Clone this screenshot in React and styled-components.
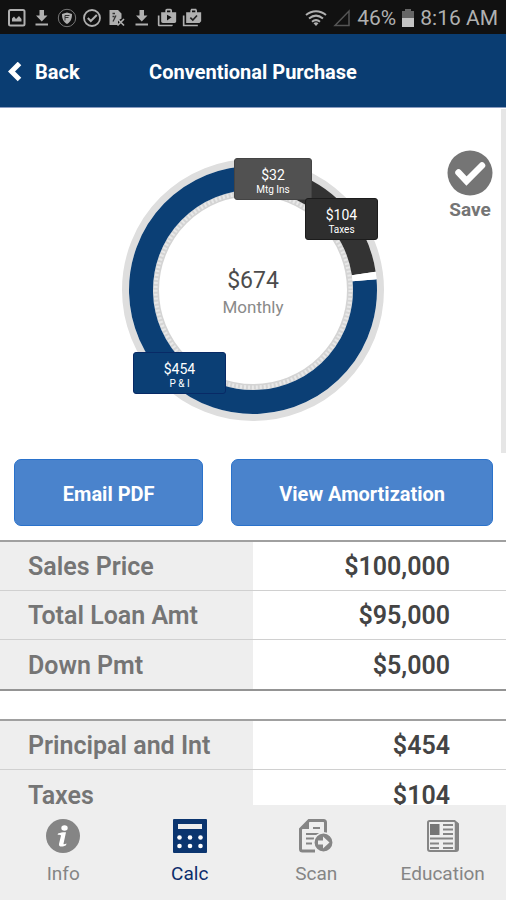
import React from "react";
import styled, { createGlobalStyle } from "styled-components";
import { MdShopTwo } from "react-icons/md";

const GlobalStyle = createGlobalStyle`
  * { box-sizing: border-box; }
  body { margin: 0; background: #fff; font-family: Roboto, "Liberation Sans", sans-serif; }
  button, a { font-family: inherit; }
`;

const Screen = styled.div`
  display: flex;
  flex-direction: column;
  height: 100vh;
  background: #fff;
`;

const StatusBar = styled.div`
  display: flex;
  flex: none;
  align-items: center;
  justify-content: space-between;
  height: 34px;
  padding: 2px 8px 0 7px;
  background: #111;
  color: #b0b0b0;
  font-size: 21px;
  line-height: 24px;
`;

const Notifications = styled.div`
  display: flex;
  gap: 5px;
  svg { width: 20px; height: 20px; }
`;

const DeviceState = styled.div`
  display: flex;
  align-items: center;
  gap: 6px;
`;

const Header = styled.header`
  display: grid;
  grid-template-columns: 1fr auto 1fr;
  flex: none;
  align-items: center;
  height: 74px;
  padding: 2px 8px 0;
  border-bottom: 1px solid #8a9cc0;
  background: #0a3d72;
  color: #fff;
`;

const BackButton = styled.button`
  display: flex;
  align-items: center;
  justify-self: start;
  gap: 13px;
  padding: 0;
  border: 0;
  background: none;
  color: inherit;
  font-size: 20px;
  font-weight: 700;
  line-height: 24px;
`;

const Title = styled.h1`
  margin: 0;
  font-size: 20px;
  font-weight: 700;
  line-height: 24px;
`;

const Viewport = styled.div`
  position: relative;
  flex: 1;
  min-height: 0;
`;

const Main = styled.main`
  height: 100%;
  overflow-y: auto;
  scrollbar-width: none;
`;

const ScrollThumb = styled.div`
  position: absolute;
  top: 1px;
  right: 0;
  width: 5px;
  height: 344px;
  background: #e6e6e6;
`;

const Summary = styled.section`
  display: grid;
  grid-template-columns: 1fr auto 1fr;
  padding: 42px 13px 38px;
`;

const Chart = styled.div`
  position: relative;
  grid-column: 2;
  width: 262px;
  height: 262px;
  margin-top: 9px;
`;

const ChartTotal = styled.div`
  position: absolute;
  inset: 0;
  display: flex;
  flex-direction: column;
  align-items: center;
  justify-content: center;
  padding-top: 6px;
  color: #4c4c4c;
  font-size: 23px;
  line-height: 28px;
  small { color: #8a8a8a; font-size: 17px; line-height: 24px; }
`;

const Tag = styled.div`
  position: absolute;
  top: ${(p) => p.$y}px;
  left: ${(p) => p.$x}px;
  display: flex;
  flex-direction: column;
  align-items: center;
  width: ${(p) => p.$w}px;
  height: 42px;
  padding-top: 8px;
  border: 1px solid ${(p) => p.$edge};
  border-radius: 3px;
  background: ${(p) => p.$fill};
  color: #fff;
  font-size: 14px;
  line-height: 16px;
  small { font-size: 10px; line-height: 14px; }
`;

const SaveButton = styled.button`
  display: flex;
  flex-direction: column;
  align-items: center;
  align-self: start;
  justify-self: end;
  gap: 2px;
  padding: 0;
  border: 0;
  background: none;
  color: #757575;
  font-size: 19px;
  font-weight: 700;
  line-height: 24px;
`;

const Actions = styled.div`
  display: flex;
  gap: 28px;
  padding: 0 13px 0 14px;
`;

const ActionButton = styled.button`
  flex: ${(p) => p.$grow} 1 0;
  height: 67px;
  padding: 2px 0 0;
  border: 1px solid #2a72cb;
  border-radius: 7px;
  background: #4a83cc;
  color: #fff;
  font-size: 20px;
  font-weight: 700;
  line-height: 24px;
`;

const Figures = styled.table`
  width: 100%;
  margin: ${(p) => (p.$first ? 14 : 28)}px 0 0;
  border-collapse: separate;
  border-spacing: 0;
  border-top: 2px solid #a0a0a0;
  border-bottom: 2px solid #949494;
  table-layout: fixed;
`;

const FigureRow = styled.tr`
  height: 49px;
  &:not(:last-child) > * { border-bottom: 1px solid #d0d0d0; }
`;

const FigureLabel = styled.th`
  width: 50%;
  padding: 2px 0 0 28px;
  background: #eee;
  color: #757575;
  font-size: 25px;
  font-weight: 600;
  line-height: 28px;
  text-align: left;
`;

const FigureValue = styled.td`
  padding: 2px 56px 0 0;
  color: #444;
  font-size: 25px;
  font-weight: 600;
  line-height: 28px;
  text-align: right;
`;

const TabBar = styled.nav`
  display: grid;
  grid-template-columns: repeat(4, 1fr);
  flex: none;
  height: 95px;
  padding-top: 14px;
  background: #eee;
`;

const Tab = styled.a`
  display: flex;
  flex-direction: column;
  align-items: center;
  gap: 9px;
  color: ${(p) => (p.$active ? "#0b2c6b" : "#858585")};
  font-size: 19px;
  line-height: 24px;
  text-decoration: none;
`;

const ImageIcon = () => (
  <svg viewBox="0 0 20 20" fill="none" stroke="currentColor" aria-hidden="true">
    <rect x="2" y="2" width="15.5" height="15.5" rx="1.5" strokeWidth="2" />
    <path d="M5 13.500v-3l2-2 2 2.500 3-3 2.500 3v2.500z" fill="currentColor" stroke="none" />
  </svg>
);
const DownloadIcon = () => (
  <svg viewBox="0 0 20 20" fill="currentColor" aria-hidden="true">
    <path d="M7.500 2h4.500v5.500h3.500L9.750 13.500 4 7.500h3.500zM3.500 15.500h12.500v2H3.500z" />
  </svg>
);
const ShieldIcon = () => (
  <svg viewBox="0 0 20 20" fill="none" aria-hidden="true">
    <circle cx="10" cy="10" r="8.700" stroke="#777" strokeWidth="1" />
    <path d="M10 4.500l5 1.500c0 5-1.500 8-5 10-3.500-2-5-5-5-10z" fill="currentColor" />
    <path d="M8 7.500h4.500M8 9.500h3.500M8 7.500v5" stroke="#333" strokeWidth="1" />
  </svg>
);
const CircleCheckIcon = () => (
  <svg viewBox="0 0 20 20" fill="none" stroke="currentColor" aria-hidden="true">
    <circle cx="10" cy="10" r="8" strokeWidth="1.800" />
    <path d="M5.800 10l3 3 6-6" strokeWidth="2" />
  </svg>
);
const FileErrorIcon = () => (
  <svg viewBox="0 0 20 20" fill="none" aria-hidden="true">
    <path d="M2.500 2h8.500l3.500 3.500v5l-3.500 2v4.500H2.500z" fill="currentColor" />
    <path d="M5.500 5.500h2.500M5.500 8.500h2M9 7.500l-3 6" stroke="#333" strokeWidth="1.300" />
    <path d="M10.500 11l6.500 6.500m0-6.500l-6.500 6.500" stroke="currentColor" strokeWidth="1.700" />
  </svg>
);
const BagCheckIcon = () => (
  <svg viewBox="0 0 24 24" fill="none" aria-hidden="true">
    <path d="M2 9v12h17" stroke="currentColor" strokeWidth="2" />
    <path fillRule="evenodd" fill="currentColor" d="M5 5h5V3l1-2h6l1 2v2h5v11l-2 2H5zM12 3v2h4V3z" />
    <path d="M10 11.500l3 3 5-5.500" stroke="#222" strokeWidth="2" />
  </svg>
);
const WifiIcon = () => (
  <svg width="22" height="18" viewBox="0 0 22 18" fill="none" stroke="currentColor" strokeWidth="2" aria-hidden="true">
    <path d="M1 6c6-5 14-5 20 0M4 9.500c4.500-3.700 9.500-3.700 14 0M7 12.700c2.500-2 5.500-2 8 0" />
    <path d="M8.500 14.200c1.700-1.200 3.300-1.200 5 0L11 17z" fill="currentColor" stroke="none" />
  </svg>
);
const SignalIcon = () => (
  <svg width="18" height="18" viewBox="0 0 18 18" fill="none" aria-hidden="true">
    <path d="M2 16.500L16 2v14.500z" stroke="#555" strokeWidth="1.500" />
  </svg>
);
const BatteryIcon = () => (
  <svg width="12" height="18" viewBox="0 0 12 18" aria-hidden="true">
    <path d="M0 2h3V0h6v2h3v7H0z" fill="#666" />
    <path d="M0 9h12v9H0z" fill="#c4c4c4" />
  </svg>
);
const BackIcon = () => (
  <svg width="14" height="20" viewBox="0 0 14 20" fill="none" stroke="#fff" strokeWidth="5" aria-hidden="true">
    <path d="M11.500 1.500L3.500 9.500l8 8" />
  </svg>
);
const SaveIcon = () => (
  <svg width="46" height="46" viewBox="0 0 46 46" aria-hidden="true">
    <circle cx="23" cy="23" r="22.500" fill="#757575" />
    <path d="M11.500 22.500l8 8.500L35 15.500" fill="none" stroke="#fff" strokeWidth="6.500" strokeLinecap="round" />
  </svg>
);
const InfoIcon = () => (
  <svg width="34" height="34" viewBox="0 0 34 34" aria-hidden="true">
    <circle cx="17" cy="17" r="17" fill="#858585" />
    <ellipse cx="18.500" cy="9" rx="3.200" ry="2.700" fill="#fff" />
    <path d="M12 14.500c3-1 5-1.500 8-1.300l-2.500 11.500c0 1 1.500.3 3-.3l-.5 1.800c-3 1.800-7.500 2.300-7-1.200l2-8.500c-.5-.9-2-.8-3.300-.6z" fill="#fff" />
  </svg>
);
const CalcIcon = () => (
  <svg width="34" height="34" viewBox="0 0 34 34" aria-hidden="true">
    <rect width="34" height="34" rx="1" fill="#0b356f" />
    <rect x="5" y="5" width="24" height="5" fill="#eee" />
    {[6.5, 17, 27.5].map((x) =>
      [18.5, 27].map((y) => <circle key={`${x}-${y}`} cx={x} cy={y} r="2.300" fill="#fff" />)
    )}
  </svg>
);
const ScanIcon = () => (
  <svg width="34" height="34" viewBox="0 0 34 34" fill="none" stroke="#858585" aria-hidden="true">
    <path d="M26.500 14V3.500Q26.500 1.500 24.500 1.500H10L1.500 10v20Q1.500 32 3.500 32H16" strokeWidth="3" />
    <path d="M10 1v9H1z" fill="#858585" stroke="none" />
    <path d="M14 9h7M7 15h13M7 19.500h8M7 24.500h6" strokeWidth="2" />
    <circle cx="24.500" cy="23.500" r="9.700" fill="#858585" stroke="#eee" strokeWidth="1.500" />
    <path d="M19 21.500h5v-4l6.500 6-6.500 6v-4h-5z" fill="#eee" stroke="none" />
  </svg>
);
const NewsIcon = () => (
  <svg width="34" height="34" viewBox="0 0 34 34" fill="none" stroke="#858585" aria-hidden="true">
    <path d="M2 3.500Q2 2 3.500 2h25L32 5v25q0 2-2 2H4q-2 0-2-2z" strokeWidth="2" />
    <path d="M30 3v28" strokeWidth="2.500" />
    <rect x="4" y="5" width="9.500" height="11" fill="#757575" stroke="none" />
    <path d="M17 6h10M17 10.500h10M17 15h10M4 19.500h23M4 24.500h9M4 29h9M17 24.500h10M17 29h10" strokeWidth="2" />
  </svg>
);

const RADIUS = 112;
const point = (deg) => {
  const a = (deg * Math.PI) / 180;
  return `${131 + RADIUS * Math.sin(a)} ${131 - RADIUS * Math.cos(a)}`;
};
const Arc = ({ from, to, color }) => (
  <path
    d={`M${point(from)}A${RADIUS} ${RADIUS} 0 ${to - from > 180 ? 1 : 0} 1 ${point(to)}`}
    fill="none"
    stroke={color}
    strokeWidth="24"
  />
);

const Donut = () => (
  <svg width="262" height="262" viewBox="0 0 262 262" role="img" aria-label="Monthly payment breakdown">
    <circle cx="131" cy="131" r="127.500" fill="none" stroke="#dedede" strokeWidth="7" />
    <circle cx="131" cy="131" r="97" fill="none" stroke="#d4d4d4" strokeWidth="6" />
    <circle cx="131" cy="131" r="97.500" fill="none" stroke="#e8e8e8" strokeWidth="4" strokeDasharray="2 2" />
    <Arc from={85} to={360} color="#0b3f75" />
    <Arc from={0} to={25} color="#555" />
    <Arc from={25} to={81.5} color="#333" />
    <Arc from={81.5} to={85} color="#fff" />
  </svg>
);

const tags = [
  { amount: "$32", name: "Mtg Ins", x: 112, y: -1, w: 78, fill: "#515151", edge: "#444" },
  { amount: "$104", name: "Taxes", x: 183, y: 39, w: 73, fill: "#2e2e2e", edge: "#1c1c1c" },
  { amount: "$454", name: "P & I", x: 11, y: 193, w: 93, fill: "#0b3f75", edge: "#082a66" },
];

const groups = [
  [["Sales Price", "$100,000"], ["Total Loan Amt", "$95,000"], ["Down Pmt", "$5,000"]],
  [["Principal and Int", "$454"], ["Taxes", "$104"]],
];

const tabs = [
  ["Info", InfoIcon],
  ["Calc", CalcIcon],
  ["Scan", ScanIcon],
  ["Education", NewsIcon],
];

export default function App() {
  return (
    <Screen>
      <GlobalStyle />
      <StatusBar>
        <Notifications>
          <ImageIcon />
          <DownloadIcon />
          <ShieldIcon />
          <CircleCheckIcon />
          <FileErrorIcon />
          <DownloadIcon />
          <MdShopTwo aria-hidden="true" />
          <BagCheckIcon />
        </Notifications>
        <DeviceState>
          <WifiIcon />
          <SignalIcon />
          <span>46%</span>
          <BatteryIcon />
          <span>8:16 AM</span>
        </DeviceState>
      </StatusBar>
      <Header>
        <BackButton type="button"><BackIcon />Back</BackButton>
        <Title>Conventional Purchase</Title>
      </Header>
      <Viewport>
        <Main>
          <Summary>
            <Chart>
              <Donut />
              <ChartTotal>$674<small>Monthly</small></ChartTotal>
              {tags.map((t) => (
                <Tag key={t.name} $x={t.x} $y={t.y} $w={t.w} $fill={t.fill} $edge={t.edge}>
                  {t.amount}<small>{t.name}</small>
                </Tag>
              ))}
            </Chart>
            <SaveButton type="button"><SaveIcon />Save</SaveButton>
          </Summary>
          <Actions>
            <ActionButton type="button" $grow={189}>Email PDF</ActionButton>
            <ActionButton type="button" $grow={262}>View Amortization</ActionButton>
          </Actions>
          {groups.map((rows, i) => (
            <Figures key={rows[0][0]} $first={i === 0}>
              <tbody>
                {rows.map(([label, value]) => (
                  <FigureRow key={label}>
                    <FigureLabel scope="row">{label}</FigureLabel>
                    <FigureValue>{value}</FigureValue>
                  </FigureRow>
                ))}
              </tbody>
            </Figures>
          ))}
        </Main>
        <ScrollThumb />
      </Viewport>
      <TabBar>
        {tabs.map(([name, Icon]) => (
          <Tab key={name} href={`#${name.toLowerCase()}`} $active={name === "Calc"} aria-current={name === "Calc" ? "page" : undefined}>
            <Icon />{name}
          </Tab>
        ))}
      </TabBar>
    </Screen>
  );
}
